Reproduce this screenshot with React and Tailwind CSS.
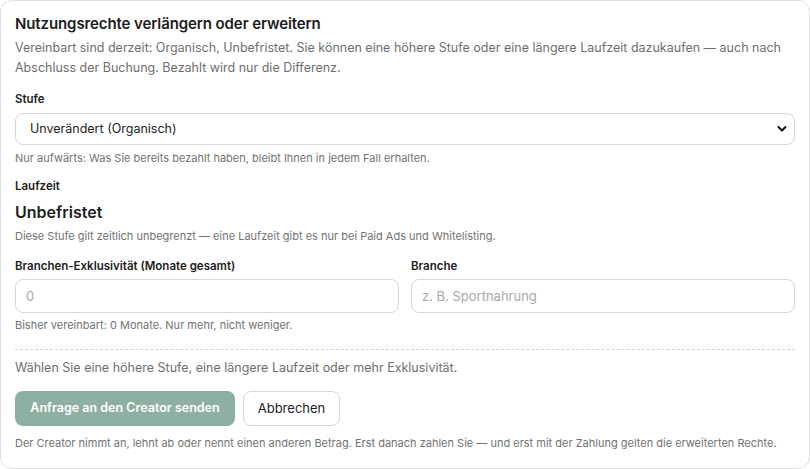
import React from "react";

export default function App() {
  return (
    <div className="w-[810px] h-[469px] bg-white" style={{ fontFamily: "Inter, 'Noto Sans', sans-serif" }}>
      <div className="w-[810px] h-[469px] border border-[#dedede] rounded-[12px] px-[14px] pt-[13px] text-[#1c1c1c]">
        <h2 className="text-[15px] leading-5 font-semibold tracking-[-0.1px]">Nutzungsrechte verlängern oder erweitern</h2>
        <p className="mt-1 text-[12.5px] leading-5 text-[#6e6e6e]">
          Vereinbart sind derzeit: Organisch, Unbefristet. Sie können eine höhere Stufe oder eine längere Laufzeit dazukaufen — auch nach Abschluss der Buchung. Bezahlt wird nur die Differenz.
        </p>

        <div className="mt-[13px] text-[11.5px] leading-4 font-semibold">Stufe</div>
        <div className="relative mt-[6px] w-[780px]">
          <select className="appearance-none w-full h-[32px] rounded-[8px] border border-[#d6d6d6] bg-white pl-[14px] pr-8 text-[12.5px] text-[#222] outline-none" defaultValue="u">
            <option value="u">Unverändert (Organisch)</option>
          </select>
          <svg className="absolute right-[8px] top-[12px] pointer-events-none" width="10" height="8" viewBox="0 0 10 8" fill="none">
            <path d="M1.5 2 L5 5.5 L8.5 2" stroke="#111" strokeWidth="2" strokeLinecap="round" strokeLinejoin="round" />
          </svg>
        </div>
        <p className="mt-[5px] text-[11px] leading-4 text-[#727272]">Nur aufwärts: Was Sie bereits bezahlt haben, bleibt Ihnen in jedem Fall erhalten.</p>

        <div className="mt-[12px] text-[11.5px] leading-4 font-semibold">Laufzeit</div>
        <div className="mt-[8px] text-[16px] leading-5 font-semibold">Unbefristet</div>
        <p className="mt-[6px] text-[11px] leading-4 text-[#727272]">Diese Stufe gilt zeitlich unbegrenzt — eine Laufzeit gibt es nur bei Paid Ads und Whitelisting.</p>

        <div className="mt-[14px] grid grid-cols-2 gap-x-3 w-[780px]">
          <div>
            <div className="text-[11.5px] leading-4 font-semibold">Branchen-Exklusivität (Monate gesamt)</div>
            <input className="mt-[5px] w-full h-[34px] rounded-[8px] border border-[#d6d6d6] px-[10px] text-[13px] outline-none placeholder:text-[#a8a8a8]" placeholder="0" />
          </div>
          <div>
            <div className="text-[11.5px] leading-4 font-semibold">Branche</div>
            <input className="mt-[5px] w-full h-[34px] rounded-[8px] border border-[#d6d6d6] px-[10px] text-[13px] outline-none placeholder:text-[#a8a8a8]" placeholder="z. B. Sportnahrung" />
          </div>
        </div>
        <p className="mt-[4px] text-[11px] leading-4 text-[#727272]">Bisher vereinbart: 0 Monate. Nur mehr, nicht weniger.</p>

        <div className="mt-[16px] w-[780px] border-t border-dashed border-[#d4d4d4]"></div>
        <p className="mt-[8px] text-[12.5px] leading-5 text-[#6e6e6e]">Wählen Sie eine höhere Stufe, eine längere Laufzeit oder mehr Exklusivität.</p>

        <div className="mt-[13px] flex gap-2">
          <button className="h-[35px] w-[220px] rounded-[8px] bg-[#8eb0a2] text-white text-[12.5px] font-semibold">Anfrage an den Creator senden</button>
          <button className="h-[35px] w-[97px] rounded-[8px] border border-[#d6d6d6] bg-white text-[13px] text-[#222]">Abbrechen</button>
        </div>
        <p className="mt-[9px] text-[11px] leading-4 text-[#727272]">Der Creator nimmt an, lehnt ab oder nennt einen anderen Betrag. Erst danach zahlen Sie — und erst mit der Zahlung gelten die erweiterten Rechte.</p>
      </div>
    </div>
  );
}
